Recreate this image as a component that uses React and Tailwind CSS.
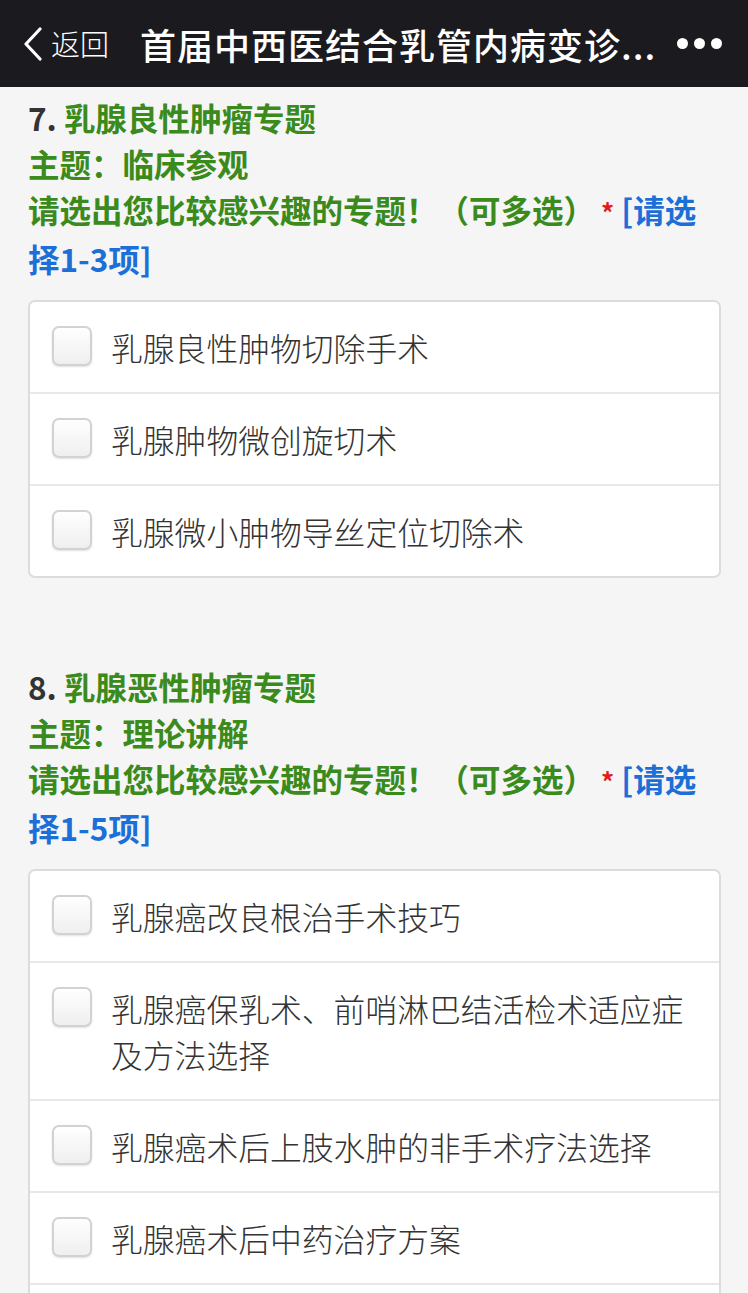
import React from "react";

const font = { fontFamily: '"Noto Sans CJK SC", "Noto Sans", sans-serif' };

const questions = [
  {
    no: "7.",
    title: "乳腺良性肿瘤专题",
    topic: "主题：临床参观",
    range: "[请选择1-3项]",
    options: ["乳腺良性肿物切除手术", "乳腺肿物微创旋切术", "乳腺微小肿物导丝定位切除术"],
  },
  {
    no: "8.",
    title: "乳腺恶性肿瘤专题",
    topic: "主题：理论讲解",
    range: "[请选择1-5项]",
    options: [
      "乳腺癌改良根治手术技巧",
      "乳腺癌保乳术、前哨淋巴结活检术适应症及方法选择",
      "乳腺癌术后上肢水肿的非手术疗法选择",
      "乳腺癌术后中药治疗方案",
      "乳腺癌新辅助化疗的临床应用",
    ],
  },
];

const Header = () => (
  <div className="h-[87px] bg-[#1b1b1f] text-white flex items-center pl-[22px] pr-[26px]">
    <svg width="22" height="34" viewBox="0 0 22 34" className="shrink-0">
      <path d="M18 2 L4 17 L18 32" fill="none" stroke="white" strokeWidth="3.2" strokeLinecap="round" strokeLinejoin="round" />
    </svg>
    <span className="ml-[7px] text-[29px] leading-none font-light">返回</span>
    <span className="ml-[31px] text-[36px] leading-none font-medium whitespace-nowrap tracking-[1px]">首届中西医结合乳管内病变诊...</span>
    <div className="ml-auto flex gap-[6px]">
      <span className="w-[11px] h-[11px] rounded-full bg-white" />
      <span className="w-[11px] h-[11px] rounded-full bg-white" />
      <span className="w-[11px] h-[11px] rounded-full bg-white" />
    </div>
  </div>
);

const Question = ({ q }) => (
  <div className="mb-[85px]">
    <div className="pl-[28px] pr-[40px] text-[31.5px] leading-[46px] font-bold text-[#3a8a1c]">
      <div>
        <span className="text-[#333]">{q.no}</span> {q.title}
      </div>
      <div>{q.topic}</div>
      <div>
        请选出您比较感兴趣的专题！（可多选）<span className="text-[#e41b1b] text-[26px]"> *</span>{" "}
        <span className="text-[#1d6fd8]">{q.range}</span>
      </div>
    </div>
    <div className="mt-[19px] mx-[28px] mr-[27px] bg-white border-2 border-[#dcdcdc] rounded-[7px] overflow-hidden">
      {q.options.map((o, i) => (
        <div key={i} className={`flex items-start pl-[22px] pr-[22px] py-[22px] ${i > 0 ? "border-t-2 border-[#e8e8e8]" : ""}`}>
          <span className="shrink-0 mt-[2px] w-[40px] h-[40px] rounded-[7px] border-2 border-[#d2d2d2] bg-gradient-to-b from-white to-[#efefef] shadow-[0_1px_2px_rgba(0,0,0,0.12)]" />
          <span className="ml-[19px] text-[31.8px] leading-[46px] text-[#333] font-light">{o}</span>
        </div>
      ))}
    </div>
  </div>
);

export default function App() {
  return (
    <div style={font} className="w-[748px] h-[1293px] overflow-hidden bg-[#f5f5f5]">
      <Header />
      <div className="pt-[7px]">
        {questions.map((q) => (
          <Question key={q.no} q={q} />
        ))}
      </div>
    </div>
  );
}
